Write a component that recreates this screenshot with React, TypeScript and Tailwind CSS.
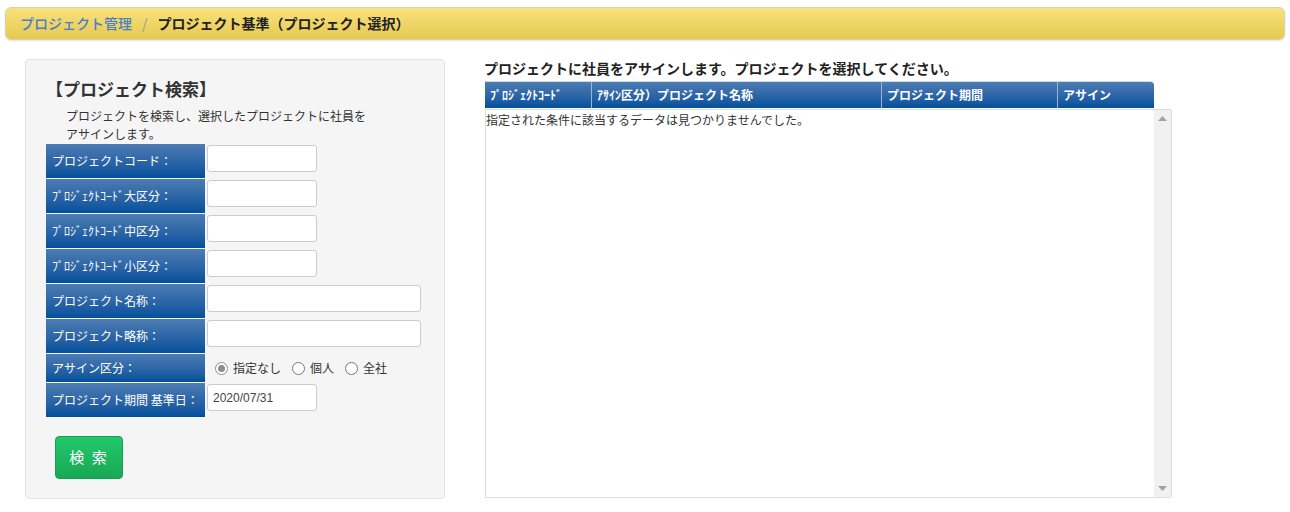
import React from "react";

const font = { fontFamily: '"Noto Sans CJK JP", "Noto Sans", sans-serif' };

function Label({ children, h }: { children: React.ReactNode; h: string }) {
  return (
    <div
      className={`w-[159px] ${h} flex items-center pl-[6px] text-[12px] text-white bg-gradient-to-b from-[#4c7cb3] to-[#00509b]`}
    >
      {children}
    </div>
  );
}

function Input({ w, value }: { w: string; value?: string }) {
  return (
    <div
      className={`${w} h-[27px] mt-[1px] ml-[2px] bg-white border border-[#cccccc] rounded-[3px] flex items-center pl-[5px] text-[12px] text-[#444] font-['Liberation_Sans',Arial,sans-serif]`}
    >
      {value}
    </div>
  );
}

function Radio({ checked, label }: { checked?: boolean; label: string }) {
  return (
    <div className="flex items-center gap-[5px]">
      <span
        className={`w-[13px] h-[13px] rounded-full border bg-white flex items-center justify-center ${
          checked ? "border-[#8c8c8c]" : "border-[#767676]"
        }`}
      >
        {checked && <span className="w-[7px] h-[7px] rounded-full bg-[#8c8c8c]" />}
      </span>
      <span className="text-[12px] text-[#333]">{label}</span>
    </div>
  );
}

export default function App() {
  return (
    <div className="w-[1290px] h-[512px] bg-white overflow-hidden text-[#333]" style={font}>
      {/* breadcrumb */}
      <div className="mx-[5px] mt-[7px] h-[33px] rounded-[6px] border border-[#d9d2a8] bg-gradient-to-b from-[#f8e27d] to-[#e6c951] flex items-center pl-[14px] text-[14px] shadow-[0_1px_2px_rgba(0,0,0,0.12)]">
        <span className="text-[#4b7ec2] font-medium">プロジェクト管理</span>
        <span className="text-[#9a9a9a] mx-[10px]">/</span>
        <span className="text-[#222] font-bold">プロジェクト基準（プロジェクト選択）</span>
      </div>

      <div className="flex mt-[19px]">
        {/* left panel */}
        <div className="ml-[25px] w-[420px] h-[440px] bg-[#f5f5f5] border border-[#e3e3e3] rounded-[4px] pl-[20px]">
          <div className="mt-[17px] text-[17px] font-bold text-[#333] leading-[24px]">【プロジェクト検索】</div>
          <div className="mt-[6px] ml-[20px] text-[12px] leading-[18px] text-[#333] w-[310px]">
            プロジェクトを検索し、選択したプロジェクトに社員をアサインします。
          </div>
          <div className="mt-[1px] flex flex-col gap-[1px]">
            <div className="flex h-[34px]">
              <Label h="h-[34px]">プロジェクトコード：</Label>
              <Input w="w-[110px]" />
            </div>
            <div className="flex h-[34px]">
              <Label h="h-[34px]">ﾌﾟﾛｼﾞｪｸﾄｺｰﾄﾞ大区分：</Label>
              <Input w="w-[110px]" />
            </div>
            <div className="flex h-[34px]">
              <Label h="h-[34px]">ﾌﾟﾛｼﾞｪｸﾄｺｰﾄﾞ中区分：</Label>
              <Input w="w-[110px]" />
            </div>
            <div className="flex h-[34px]">
              <Label h="h-[34px]">ﾌﾟﾛｼﾞｪｸﾄｺｰﾄﾞ小区分：</Label>
              <Input w="w-[110px]" />
            </div>
            <div className="flex h-[34px]">
              <Label h="h-[34px]">プロジェクト名称：</Label>
              <Input w="w-[214px]" />
            </div>
            <div className="flex h-[34px]">
              <Label h="h-[34px]">プロジェクト略称：</Label>
              <Input w="w-[214px]" />
            </div>
            <div className="flex h-[28px]">
              <Label h="h-[28px]">アサイン区分：</Label>
              <div className="flex items-center ml-[10px] gap-[11px]">
                <Radio checked label="指定なし" />
                <Radio label="個人" />
                <Radio label="全社" />
              </div>
            </div>
            <div className="flex h-[34px]">
              <Label h="h-[34px]">プロジェクト期間 基準日：</Label>
              <Input w="w-[110px]" value="2020/07/31" />
            </div>
          </div>
          <button className="mt-[19px] ml-[9px] w-[68px] h-[43px] rounded-[4px] border border-[#19a04f] bg-gradient-to-b from-[#22c96c] to-[#19a853] text-white text-[15px] tracking-[2px]">
            検 索
          </button>
        </div>

        {/* right */}
        <div className="ml-[40px] flex flex-col">
          <div className="-ml-[1px] text-[14px] font-bold text-[#222] leading-[20px] -mt-[1px]">
            プロジェクトに社員をアサインします。プロジェクトを選択してください。
          </div>
          <div className="mt-[3px] flex w-[669px] h-[27px] rounded-tr-[4px] overflow-hidden bg-gradient-to-b from-[#4c7cb3] to-[#00509b] text-white text-[12px] font-bold border-t border-[#d0d8e0]">
            <div className="w-[107px] flex items-center pl-[5px] border-r border-[#9ab4d4]">ﾌﾟﾛｼﾞｪｸﾄｺｰﾄﾞ</div>
            <div className="w-[290px] flex items-center pl-[5px] border-r border-[#9ab4d4]">ｱｻｲﾝ区分）プロジェクト名称</div>
            <div className="w-[176px] flex items-center pl-[5px] border-r border-[#9ab4d4]">プロジェクト期間</div>
            <div className="flex-1 flex items-center pl-[5px]">アサイン</div>
          </div>
          <div className="mt-[1px] w-[687px] h-[389px] border border-[#dddddd] rounded-r-[2px] flex">
            <div className="flex-1 text-[12px] text-[#333] leading-[18px] pt-[1px] pl-[0px]">
              指定された条件に該当するデータは見つかりませんでした。
            </div>
            <div className="w-[17px] h-full bg-[#f1f1f1] flex flex-col justify-between items-center py-[6px]">
              <svg width="9" height="5" viewBox="0 0 9 5">
                <polygon points="4.5,0 9,5 0,5" fill="#a3a3a3" />
              </svg>
              <svg width="9" height="5" viewBox="0 0 9 5">
                <polygon points="0,0 9,0 4.5,5" fill="#a3a3a3" />
              </svg>
            </div>
          </div>
        </div>
      </div>
    </div>
  );
}
